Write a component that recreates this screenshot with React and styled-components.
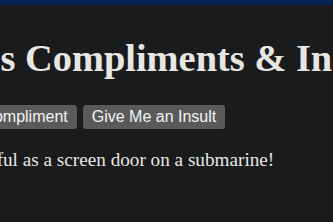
import React from "react";
import styled, { createGlobalStyle } from "styled-components";

const GlobalStyle = createGlobalStyle`
  html, body {
    margin: 0;
    padding: 0;
    background: #1a1b1d;
    overflow: hidden;
  }
`;

const Page = styled.div`
  display: flex;
  flex-direction: column;
  align-items: center;
  min-height: 100vh;
  background: #1a1b1d;
  color: #e8e6e3;
  font-family: "Liberation Serif", "Times New Roman", serif;
`;

const TopBar = styled.div`
  align-self: stretch;
  height: 5px;
  background: #082450;
`;

const Content = styled.main`
  flex-shrink: 0;
  width: 541px;
  padding-top: 5px;
`;

const Title = styled.h1`
  margin: 25.6px 0;
  font-size: 38.4px;
  font-weight: bold;
  white-space: nowrap;
  color: #e8e6e3;
`;

const ButtonRow = styled.div`
  display: flex;
  gap: 6px;
`;

const Button = styled.button`
  font-family: "Liberation Sans", Arial, sans-serif;
  font-size: 16px;
  line-height: 18px;
  padding: 3px 9px;
  border: none;
  border-radius: 3px;
  background: #5a5a5a;
  color: #f4f4f4;
  cursor: pointer;
`;

const Message = styled.p`
  margin: 20px 0 0;
  font-size: 19.2px;
  white-space: nowrap;
`;

export default function App() {
  return (
    <>
      <GlobalStyle />
      <Page>
        <TopBar />
        <Content>
          <Title>Mark's Compliments &amp; Insults</Title>
          <ButtonRow>
            <Button>Give Me a Compliment</Button>
            <Button>Give Me an Insult</Button>
          </ButtonRow>
          <Message>You're as useful as a screen door on a submarine!</Message>
        </Content>
      </Page>
    </>
  );
}
